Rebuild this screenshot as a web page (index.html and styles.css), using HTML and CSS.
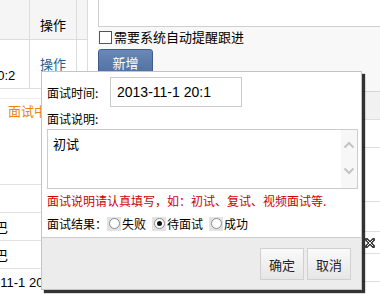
FILE: index.html
```html
<!DOCTYPE html>
<html lang="zh-CN">
<head>
    <meta charset="UTF-8">
    <meta name="viewport" content="width=device-width, initial-scale=1.0">
    <title>面试记录</title>
    <link rel="stylesheet" href="styles.css">
</head>
<body>

<div class="page">
    <div class="list">
        <div class="grid">
            <div class="row head">
                <div class="c1"></div>
                <div class="c2">操作</div>
                <div class="c3"></div>
            </div>
            <div class="row r1">
                <div class="c1"><span class="date">2013-11-1 20:2</span></div>
                <div class="c2"><a href="#">操作</a></div>
                <div class="c3"></div>
            </div>
        </div>

        <div class="sub">
            <div class="srow tall"><span class="state">面试中</span></div>
            <div class="srow"></div>
            <div class="srow"><span class="cut">巴</span></div>
            <div class="srow"><span class="cut">巴</span></div>
            <div class="srow last"><span class="date2">2013-11-1 20:2</span></div>
        </div>
    </div>

    <div class="side">
        <div class="memo"></div>
        <div class="opts">
            <label class="remind"><span class="box"></span>需要系统自动提醒跟进</label>
            <button type="button" class="btn-add">新增</button>
        </div>
        <div class="tbl">
            <div class="trow thead"></div>
            <div class="trow"></div>
            <div class="trow big"></div>
            <div class="trow mid"></div>
            <div class="trow del">
                <svg width="10" height="10" viewBox="0 0 10 10">
                    <path d="M1.5 1.5 L8.5 8.5 M8.5 1.5 L1.5 8.5" stroke="#333" stroke-width="3.2" stroke-linecap="square"/>
                    <path d="M1.8 1.8 L8.2 8.2 M8.2 1.8 L1.8 8.2" stroke="#fff" stroke-width="0.9"/>
                </svg>
            </div>
            <div class="trow"></div>
        </div>
    </div>
</div>

<!-- 面试弹窗 -->
<div class="dlg">
    <div class="dlg-body">
        <div class="line">
            <span class="lbl">面试时间:</span>
            <input type="text" class="time" value="2013-11-1 20:1">
        </div>
        <div class="line note-lbl">面试说明:</div>
        <div class="note">
            <div class="note-text">初试</div>
            <div class="sbar">
                <svg width="12" height="8" viewBox="0 0 12 8"><path d="M1.5 6.5 L6 2 L10.5 6.5" fill="none" stroke="#c4c4c4" stroke-width="2"/></svg>
                <svg width="12" height="8" viewBox="0 0 12 8"><path d="M1.5 1.5 L6 6 L10.5 1.5" fill="none" stroke="#c4c4c4" stroke-width="2"/></svg>
            </div>
        </div>
        <div class="tip">面试说明请认真填写，如：初试、复试、视频面试等.</div>
        <div class="line result">
            <span class="lbl2">面试结果：</span>
            <span class="radio"><i></i></span><span class="opt">失败</span>
            <span class="radio on"><i></i></span><span class="opt">待面试</span>
            <span class="radio"><i></i></span><span class="opt">成功</span>
        </div>
    </div>
    <div class="dlg-foot">
        <button type="button" class="btn">确定</button>
        <button type="button" class="btn">取消</button>
    </div>
</div>

</body>
</html>
```
FILE: styles.css
```css
body {
    margin: 0;
    font-family: "Noto Sans CJK SC", sans-serif;
    font-size: 12px;
    color: #000;
    background: #fff;
    width: 380px;
    height: 294px;
    overflow: hidden;
}
.page {
    display: flex;
    height: 294px;
}

/* left list */
.list {
    width: 88px;
    flex: none;
}
.grid .row {
    display: flex;
    border-bottom: 1px solid #dcdcdc;
}
.grid .c1 {
    width: 29px;
    border-right: 1px solid #dcdcdc;
    overflow: hidden;
    white-space: nowrap;
}
.grid .c2 {
    width: 47px;
    border-right: 1px solid #dcdcdc;
    text-align: center;
    font-size: 13px;
}
.grid .c3 {
    width: 10px;
    border-right: 1px solid #dcdcdc;
}
.head {
    height: 39px;
    background: #f5f5f5;
}
.head .c2 {
    padding-top: 16px;
    line-height: 18px;
}
.r1 {
    height: 48px;
}
.r1 .c1 {
    padding-top: 28px;
    line-height: 16px;
    font-family: "Liberation Sans", sans-serif;
    font-size: 13px;
}
.date {
    display: block;
    margin-left: -72px;
}
.r1 .c2 {
    padding-top: 15px;
    line-height: 18px;
}
.r1 .c2 a {
    color: #1f5f95;
    text-decoration: none;
}
.sub {
    margin-top: 9px;
    border-top: 1px solid #eeeeee;
}
.srow {
    height: 27px;
    border-bottom: 1px solid #e2e2e2;
    overflow: hidden;
    white-space: nowrap;
    line-height: 27px;
    font-size: 13px;
}
.srow.tall {
    height: 85px;
    line-height: 24px;
}
.srow.last {
    border-bottom: none;
}
.state {
    color: #e8860c;
    margin-left: 8px;
}
.cut {
    margin-left: -5px;
}
.date2 {
    display: block;
    margin-left: -33px;
    font-family: "Liberation Sans", sans-serif;
    font-size: 13px;
}

/* right side */
.side {
    flex: 1;
    margin-left: 10px;
}
.memo {
    height: 26px;
    border-left: 1px solid #cfcfcf;
    border-bottom: 1px solid #cfcfcf;
}
.opts {
    height: 64px;
    background: #f8f8f8;
    padding-top: 3px;
    box-sizing: border-box;
}
.remind {
    display: flex;
    align-items: center;
    height: 14px;
    line-height: 14px;
    font-size: 13px;
    white-space: nowrap;
}
.remind .box {
    width: 11px;
    height: 11px;
    border: 1px solid #555;
    background: #fff;
    margin-right: 2px;
    margin-left: 1px;
}
.btn-add {
    display: block;
    margin-top: 5px;
    width: 55px;
    height: 27px;
    border: 1px solid #3f5d8c;
    border-radius: 3px;
    background: linear-gradient(#6a88b8, #4f6f9f);
    color: #fff;
    font-family: inherit;
    font-size: 13px;
    padding: 0;
}
.tbl {
    border-top: 1px solid #d6d6d6;
}
.trow {
    height: 27px;
    border-bottom: 1px solid #dedede;
}
.trow.thead {
    background: #f1f1f1;
}
.trow.big {
    height: 53px;
}
.trow.mid {
    height: 29px;
}
.trow.del {
    height: 21px;
    display: flex;
    justify-content: flex-end;
    align-items: center;
    padding-right: 5px;
}

/* dialog */
.dlg {
    position: absolute;
    left: 41px;
    top: 71px;
    width: 319px;
    background: #fff;
    border: 1px solid #c4c4c4;
    box-shadow: 3px 3px 1px rgba(0, 0, 0, 0.8);
}
.dlg-body {
    padding: 5px 3px 3px 5px;
}
.line {
    display: flex;
    align-items: center;
}
.lbl {
    width: 63px;
}
.time {
    width: 132px;
    height: 30px;
    box-sizing: border-box;
    border: 1px solid #cccccc;
    padding: 0 6px;
    font-family: "Liberation Sans", sans-serif;
    font-size: 14px;
    color: #000;
    outline: none;
}
.note-lbl {
    height: 22px;
}
.note {
    width: 311px;
    height: 60px;
    box-sizing: border-box;
    border: 1px solid #cccccc;
    display: flex;
}
.note-text {
    flex: 1;
    padding: 4px 5px;
    font-size: 13px;
    line-height: 20px;
}
.sbar {
    width: 16px;
    background: #f7f7f7;
    display: flex;
    flex-direction: column;
    justify-content: space-between;
    align-items: center;
    padding: 11px 0 13px;
}
.tip {
    color: #cc0000;
    height: 24px;
    line-height: 24px;
    white-space: nowrap;
}
.result {
    height: 21px;
}
.lbl2 {
    width: 60px;
}
.radio {
    width: 14px;
    height: 14px;
    background: #e3e3e3;
    display: flex;
    align-items: center;
    justify-content: center;
}
.radio i {
    width: 11px;
    height: 11px;
    border-radius: 50%;
    border: 1px solid #8a8a8a;
    background: #fff;
    box-sizing: border-box;
    display: flex;
    align-items: center;
    justify-content: center;
}
.radio.on i::after {
    content: "";
    width: 5px;
    height: 5px;
    border-radius: 50%;
    background: #111;
}
.opt {
    margin-right: 6px;
    margin-left: 1px;
}
.dlg-foot {
    border-top: 1px solid #cccccc;
    background: #ececec;
    height: 52px;
    box-sizing: border-box;
    padding: 10px 10px 0 0;
    display: flex;
    justify-content: flex-end;
    align-items: flex-start;
    gap: 3px;
}
.btn {
    width: 44px;
    height: 32px;
    border: 1px solid #d0d0d0;
    background: linear-gradient(#fafafa, #e6e6e6);
    font-family: inherit;
    font-size: 13px;
    color: #222;
    padding: 0;
}
```
